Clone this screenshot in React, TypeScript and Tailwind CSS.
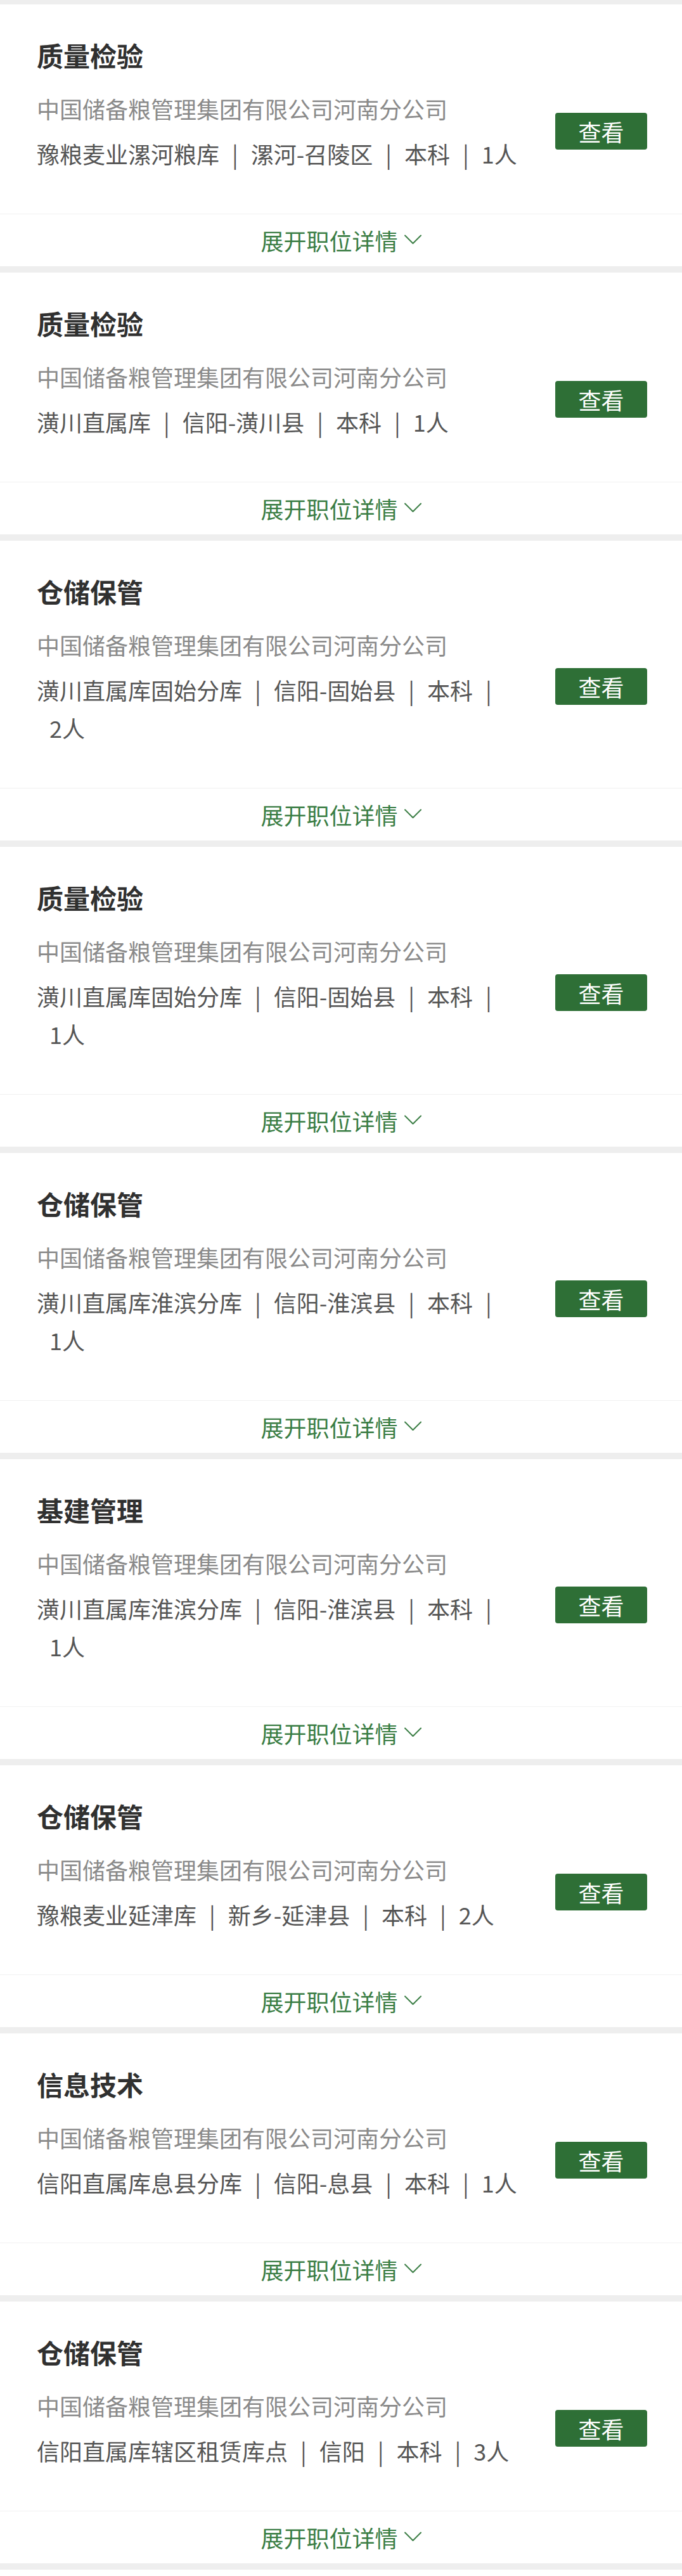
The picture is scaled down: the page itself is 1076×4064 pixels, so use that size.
import { Fragment } from "react";

type Job = {
  title: string;
  parts: string[];
};

const COMPANY = "中国储备粮管理集团有限公司河南分公司";

const jobs: Job[] = [
  { title: "质量检验", parts: ["豫粮麦业漯河粮库", "漯河-召陵区", "本科", "1人"] },
  { title: "质量检验", parts: ["潢川直属库", "信阳-潢川县", "本科", "1人"] },
  { title: "仓储保管", parts: ["潢川直属库固始分库", "信阳-固始县", "本科", "2人"] },
  { title: "质量检验", parts: ["潢川直属库固始分库", "信阳-固始县", "本科", "1人"] },
  { title: "仓储保管", parts: ["潢川直属库淮滨分库", "信阳-淮滨县", "本科", "1人"] },
  { title: "基建管理", parts: ["潢川直属库淮滨分库", "信阳-淮滨县", "本科", "1人"] },
  { title: "仓储保管", parts: ["豫粮麦业延津库", "新乡-延津县", "本科", "2人"] },
  { title: "信息技术", parts: ["信阳直属库息县分库", "信阳-息县", "本科", "1人"] },
  { title: "仓储保管", parts: ["信阳直属库辖区租赁库点", "信阳", "本科", "3人"] },
];

const JobCard = ({ job }: { job: Job }) => (
  <div className="bg-white">
    <div className="pl-[58px] pr-[55px] pt-[50px] pb-[65px]">
      <h3 className="text-[42px] leading-[60px] font-bold text-[#303030] mb-[24px]">
        {job.title}
      </h3>
      <div className="flex items-center gap-[48px]">
        <div className="flex-1 min-w-0">
          <p className="text-[36px] leading-[61px] text-[#8a8a8a] mb-[10px]">{COMPANY}</p>
          <p className="text-[36px] leading-[60px] text-[#555555]">
            {job.parts.map((part, i) => (
              <Fragment key={i}>
                {i > 0 && (
                  <>
                    <span className="ml-[20px]">|</span>
                    <wbr />
                  </>
                )}
                <span className={`whitespace-nowrap ${i > 0 ? "pl-[20px]" : ""}`}>{part}</span>
              </Fragment>
            ))}
          </p>
        </div>
        <button className="w-[145px] h-[58px] shrink-0 rounded-[4px] bg-[#2e6f36] text-white text-[36px] leading-none flex items-center justify-center">
          查看
        </button>
      </div>
    </div>

    {/* expand row */}
    <div className="h-[83px] border-t border-[#f1f1f1] flex items-center justify-center text-[#3a7d44]">
      <span className="text-[36px] leading-none">展开职位详情</span>
      <svg width="27" height="16" viewBox="0 0 27 16" className="ml-[10px] mt-[-2px]" fill="none">
        <path d="M1 1.5 L13.5 14 L26 1.5" stroke="#3a7d44" strokeWidth="2" strokeLinecap="round" strokeLinejoin="round" />
      </svg>
    </div>
  </div>
);

export default function App() {
  return (
    <div
      className="w-[1076px] bg-[#eeeeee] pt-[7px] pb-[10px] flex flex-col gap-[10px]"
      style={{ fontFamily: '"Noto Sans CJK SC", "Noto Sans", sans-serif' }}
    >
      {jobs.map((job, index) => (
        <JobCard key={index} job={job} />
      ))}
    </div>
  );
}
